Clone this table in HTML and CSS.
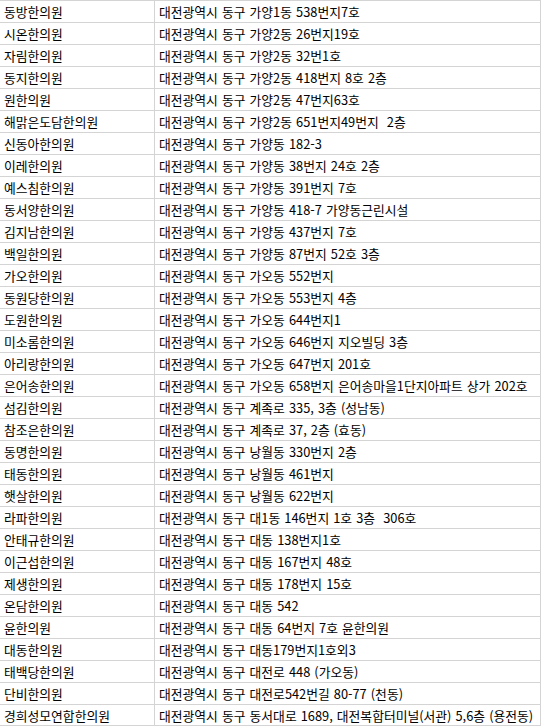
FILE: index.html
```html
<!DOCTYPE html>
<html lang="ko">
<head>
<meta charset="utf-8">
<link rel="stylesheet" href="styles.css">
</head>
<body>
<div class="sheet">
  <div class="row"><div class="cell name">동방한의원</div><div class="cell addr">대전광역시 동구 가양1동 538번지7호</div></div>
  <div class="row"><div class="cell name">시온한의원</div><div class="cell addr">대전광역시 동구 가양2동 26번지19호</div></div>
  <div class="row"><div class="cell name">자림한의원</div><div class="cell addr">대전광역시 동구 가양2동 32번1호</div></div>
  <div class="row"><div class="cell name">동지한의원</div><div class="cell addr">대전광역시 동구 가양2동 418번지 8호 2층</div></div>
  <div class="row"><div class="cell name">원한의원</div><div class="cell addr">대전광역시 동구 가양2동 47번지63호</div></div>
  <div class="row"><div class="cell name">해맑은도담한의원</div><div class="cell addr">대전광역시 동구 가양2동 651번지49번지  2층</div></div>
  <div class="row"><div class="cell name">신동아한의원</div><div class="cell addr">대전광역시 동구 가양동 182-3</div></div>
  <div class="row"><div class="cell name">이레한의원</div><div class="cell addr">대전광역시 동구 가양동 38번지 24호 2층</div></div>
  <div class="row"><div class="cell name">예스침한의원</div><div class="cell addr">대전광역시 동구 가양동 391번지 7호</div></div>
  <div class="row"><div class="cell name">동서양한의원</div><div class="cell addr">대전광역시 동구 가양동 418-7 가양동근린시설</div></div>
  <div class="row"><div class="cell name">김지남한의원</div><div class="cell addr">대전광역시 동구 가양동 437번지 7호</div></div>
  <div class="row"><div class="cell name">백일한의원</div><div class="cell addr">대전광역시 동구 가양동 87번지 52호 3층</div></div>
  <div class="row"><div class="cell name">가오한의원</div><div class="cell addr">대전광역시 동구 가오동 552번지</div></div>
  <div class="row"><div class="cell name">동원당한의원</div><div class="cell addr">대전광역시 동구 가오동 553번지 4층</div></div>
  <div class="row"><div class="cell name">도원한의원</div><div class="cell addr">대전광역시 동구 가오동 644번지1</div></div>
  <div class="row"><div class="cell name">미소롬한의원</div><div class="cell addr">대전광역시 동구 가오동 646번지 지오빌딩 3층</div></div>
  <div class="row"><div class="cell name">아리랑한의원</div><div class="cell addr">대전광역시 동구 가오동 647번지 201호</div></div>
  <div class="row"><div class="cell name">은어송한의원</div><div class="cell addr">대전광역시 동구 가오동 658번지 은어송마을1단지아파트 상가 202호</div></div>
  <div class="row"><div class="cell name">섬김한의원</div><div class="cell addr">대전광역시 동구 계족로 335, 3층 (성남동)</div></div>
  <div class="row"><div class="cell name">참조은한의원</div><div class="cell addr">대전광역시 동구 계족로 37, 2층 (효동)</div></div>
  <div class="row"><div class="cell name">동명한의원</div><div class="cell addr">대전광역시 동구 낭월동 330번지 2층</div></div>
  <div class="row"><div class="cell name">태동한의원</div><div class="cell addr">대전광역시 동구 낭월동 461번지</div></div>
  <div class="row"><div class="cell name">햇살한의원</div><div class="cell addr">대전광역시 동구 낭월동 622번지</div></div>
  <div class="row"><div class="cell name">라파한의원</div><div class="cell addr">대전광역시 동구 대1동 146번지 1호 3층  306호</div></div>
  <div class="row"><div class="cell name">안태규한의원</div><div class="cell addr">대전광역시 동구 대동 138번지1호</div></div>
  <div class="row"><div class="cell name">이근섭한의원</div><div class="cell addr">대전광역시 동구 대동 167번지 48호</div></div>
  <div class="row"><div class="cell name">제생한의원</div><div class="cell addr">대전광역시 동구 대동 178번지 15호</div></div>
  <div class="row"><div class="cell name">온담한의원</div><div class="cell addr">대전광역시 동구 대동 542</div></div>
  <div class="row"><div class="cell name">윤한의원</div><div class="cell addr">대전광역시 동구 대동 64번지 7호 윤한의원</div></div>
  <div class="row"><div class="cell name">대동한의원</div><div class="cell addr">대전광역시 동구 대동179번지1호외3</div></div>
  <div class="row"><div class="cell name">태백당한의원</div><div class="cell addr">대전광역시 동구 대전로 448 (가오동)</div></div>
  <div class="row"><div class="cell name">단비한의원</div><div class="cell addr">대전광역시 동구 대전로542번길 80-77 (천동)</div></div>
  <div class="row"><div class="cell name">경희성모연합한의원</div><div class="cell addr">대전광역시 동구 동서대로 1689, 대전복합터미널(서관) 5,6층 (용전동)</div></div>
</div>
</body>
</html>
```

FILE: styles.css
```css
html, body {
  margin: 0;
  padding: 0;
  background: #ffffff;
}
.sheet {
  width: 541px;
  font-family: "Noto Sans CJK KR", "Noto Sans", sans-serif;
  font-size: 12.8px;
  word-spacing: 0.5px;
  color: #000000;
}
.row {
  display: grid;
  grid-template-columns: 155px 386px;
  height: 22px;
  box-sizing: border-box;
  border-top: 1px solid #d4d4d4;
}
.row:last-child {
  border-bottom: 1px solid #d4d4d4;
}
.cell {
  box-sizing: border-box;
  border-right: 1px solid #d4d4d4;
  line-height: 21px;
  white-space: pre;
  overflow: hidden;
}
.name {
  padding-left: 4px;
}
.addr {
  padding-left: 4px;
}
```
